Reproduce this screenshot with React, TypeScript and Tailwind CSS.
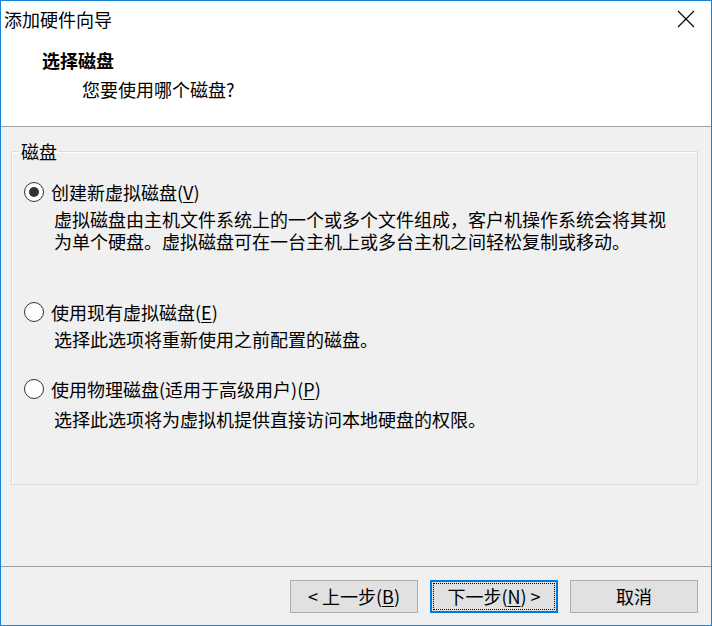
import React from "react";

const font = { fontFamily: '"Noto Sans CJK SC", "Noto Sans", sans-serif' };

const Radio: React.FC<{ checked?: boolean }> = ({ checked }) => (
  <span className="flex h-[20px] w-[20px] items-center justify-center rounded-full border border-[#333333] bg-white">
    {checked && <span className="h-[10px] w-[10px] rounded-full bg-[#333333]" />}
  </span>
);

const Option: React.FC<{
  label: string;
  keyChar: string;
  after?: string;
  desc: string[];
  checked?: boolean;
  top: string;
  gap: string;
}> = ({ label, keyChar, after, desc, checked, top, gap }) => (
  <div className={top}>
    <div className="flex h-[22px] items-center pl-[12px]">
      <Radio checked={checked} />
      <span className="ml-[7px] leading-[22px]">
        {label}(<span className="underline underline-offset-2">{keyChar}</span>){after}
      </span>
    </div>
    <div className={`${gap} pl-[42px]`}>
      {desc.map((d) => (
        <div key={d} className="leading-[22px]">
          {d}
        </div>
      ))}
    </div>
  </div>
);

const Button: React.FC<{ children: React.ReactNode; focused?: boolean }> = ({ children, focused }) => (
  <button
    className={
      focused
        ? "flex h-[33px] w-[128px] items-center justify-center border border-[#0078d7] bg-[#e1e1e1] text-[18px] shadow-[inset_0_0_0_1px_#0078d7] outline-1 outline-dotted outline-black outline-offset-[-4px]"
        : "flex h-[33px] w-[128px] items-center justify-center border border-[#adadad] bg-[#e1e1e1] text-[18px]"
    }
  >
    {children}
  </button>
);

const App: React.FC = () => {
  return (
    <div
      style={font}
      className="flex h-[626px] w-[712px] flex-col border border-[#1883d7] bg-[#f0f0f0] text-[18px] text-black"
    >
      <div className="border-b border-[#a0a0a0] bg-white">
        <div className="flex h-[35px] items-center justify-between pl-[3px] pr-[16px]">
          <span className="leading-[22px]">添加硬件向导</span>
          <svg width="18" height="18" viewBox="0 0 18 18">
            <path d="M1 1 L17 17 M17 1 L1 17" stroke="#000" strokeWidth="1.1" />
          </svg>
        </div>
        <div className="h-[90px]">
          <div className="pl-[41px] pt-[13px] font-bold leading-[22px]">选择磁盘</div>
          <div className="pl-[81px] pt-[7px] leading-[22px]">您要使用哪个磁盘?</div>
        </div>
      </div>

      <div className="h-[439px] pt-[13px] pl-[10px] pr-[13px]">
        <fieldset className="h-[345px] border border-[#dcdcdc] shadow-[inset_1px_1px_0_#ffffff]">
          <legend className="ml-[7px] px-[2px] leading-[22px]">磁盘</legend>
          <Option
            top="mt-[19px]"
            gap="mt-[5px]"
            checked
            label="创建新虚拟磁盘"
            keyChar="V"
            desc={[
              "虚拟磁盘由主机文件系统上的一个或多个文件组成，客户机操作系统会将其视",
              "为单个硬盘。虚拟磁盘可在一台主机上或多台主机之间轻松复制或移动。",
            ]}
          />
          <Option
            top="mt-[49px]"
            gap="mt-[5px]"
            label="使用现有虚拟磁盘"
            keyChar="E"
            desc={["选择此选项将重新使用之前配置的磁盘。"]}
          />
          <Option
            top="mt-[28px]"
            gap="mt-[8px]"
            label="使用物理磁盘(适用于高级用户)"
            keyChar="P"
            desc={["选择此选项将为虚拟机提供直接访问本地硬盘的权限。"]}
          />
        </fieldset>
      </div>

      <div className="flex flex-1 justify-end gap-[12px] border-t border-[#a0a0a0] pt-[13px] pr-[13px]">
        <Button>
          &lt; 上一步(<span className="underline underline-offset-2">B</span>)
        </Button>
        <Button focused>
          下一步(<span className="underline underline-offset-2">N</span>) &gt;
        </Button>
        <Button>取消</Button>
      </div>
    </div>
  );
};

export default App;
